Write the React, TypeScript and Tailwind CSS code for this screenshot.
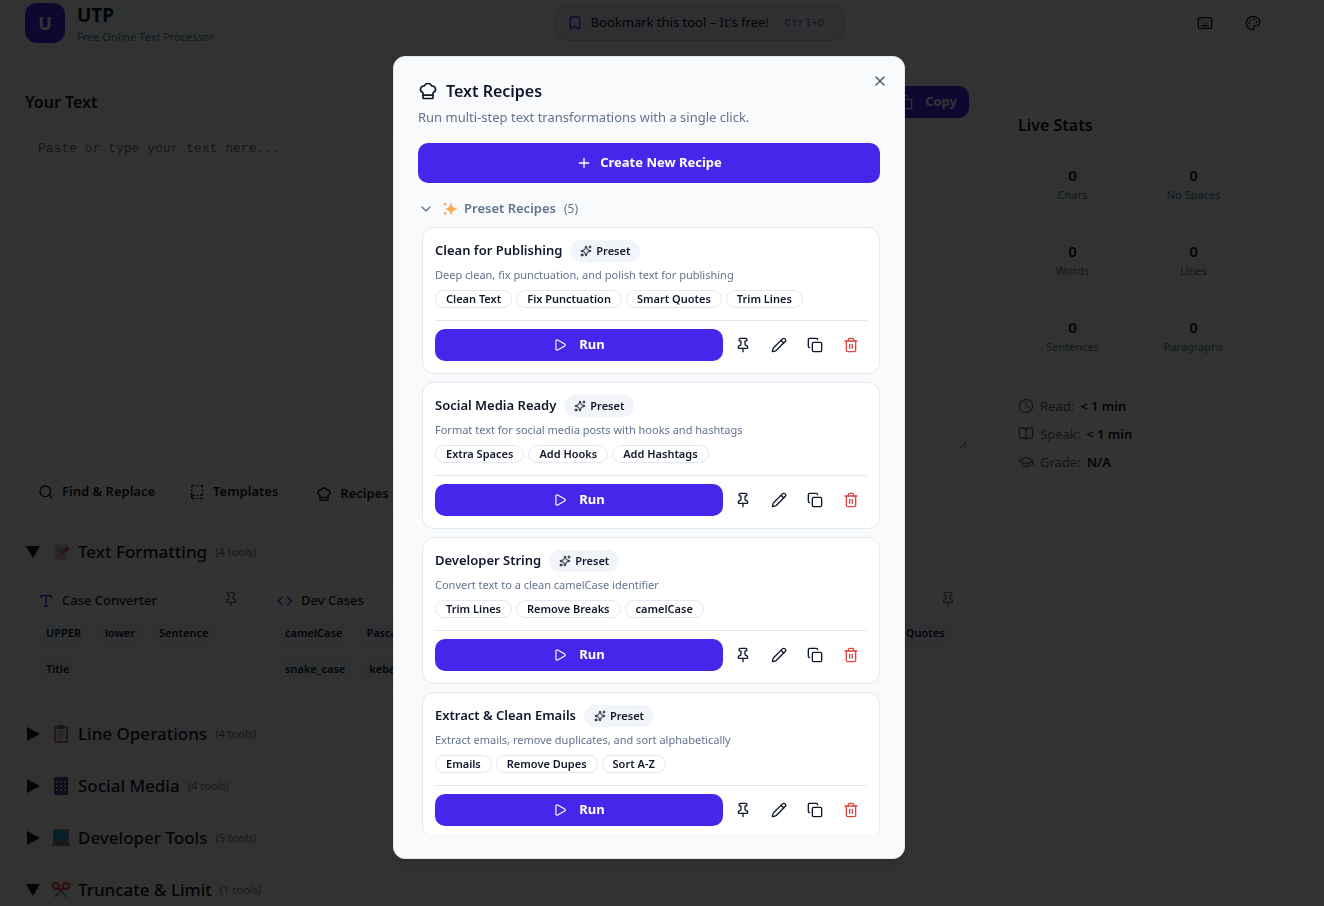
import { useState } from 'react';
import type { ReactNode } from 'react';
import {
  BookDashed,
  Bookmark,
  BookOpen,
  ChefHat,
  ChevronDown,
  Clock,
  Code,
  Copy,
  GraduationCap,
  Keyboard,
  Link,
  Palette,
  Pencil,
  Pin,
  Play,
  Plus,
  Quote,
  Search,
  Sparkles,
  Trash2,
  Type,
  X,
} from 'lucide-react';

interface Recipe {
  name: string;
  description: string;
  steps: string[];
}

const RECIPES: Recipe[] = [
  {
    name: 'Clean for Publishing',
    description: 'Deep clean, fix punctuation, and polish text for publishing',
    steps: ['Clean Text', 'Fix Punctuation', 'Smart Quotes', 'Trim Lines'],
  },
  {
    name: 'Social Media Ready',
    description: 'Format text for social media posts with hooks and hashtags',
    steps: ['Extra Spaces', 'Add Hooks', 'Add Hashtags'],
  },
  {
    name: 'Developer String',
    description: 'Convert text to a clean camelCase identifier',
    steps: ['Trim Lines', 'Remove Breaks', 'camelCase'],
  },
  {
    name: 'Extract & Clean Emails',
    description: 'Extract emails, remove duplicates, and sort alphabetically',
    steps: ['Emails', 'Remove Dupes', 'Sort A-Z'],
  },
];

const STATS = ['Chars', 'No Spaces', 'Words', 'Lines', 'Sentences', 'Paragraphs'];

const TOOLS = [
  { name: 'Case Converter', icon: Type, actions: ['UPPER', 'lower', 'Sentence', 'Title'] },
  { name: 'Dev Cases', icon: Code, actions: ['camelCase', 'PascalCase', 'snake_case', 'kebab-case'] },
  { name: 'Slugs', icon: Link, actions: ['Slugify'] },
  { name: 'Punctuation', icon: Quote, actions: ['Fix Punctuation', 'Smart Quotes'] },
];

function MemoIcon() {
  return (
    <svg viewBox="0 0 18 18" className="h-[18px] w-[18px]" aria-hidden="true">
      <path d="M2 1h13v16H2z" fill="#d9d3e2" />
      <path d="M4 5h7M4 8h6M4 11h5M4 14h9" stroke="#9a93ab" />
      <path d="M7 13l1-4 7-6 3 3-7 6z" fill="#f0705a" />
      <path d="M7 13l1-4 3 3z" fill="#f5b878" />
    </svg>
  );
}

function ClipboardIcon() {
  return (
    <svg viewBox="0 0 18 18" className="h-[18px] w-[18px]" aria-hidden="true">
      <rect x="2" y="1" width="14" height="17" rx="1" fill="#b97f70" />
      <path d="M4 3h10v13H4z" fill="#e8e2ea" />
      <path d="M6 0h6v4H6z" fill="#77728a" />
      <path d="M6 7h6M6 10h6M6 13h4" stroke="#9a93ab" />
    </svg>
  );
}

function PhoneIcon() {
  return (
    <svg viewBox="0 0 18 18" className="h-[18px] w-[18px]" aria-hidden="true">
      <rect x="2" y="0" width="14" height="18" rx="1" fill="#5b3f8c" />
      <path d="M4 4h2v2H4zM8 4h2v2H8zM12 4h2v2h-2zM4 8h2v2H4zM8 8h2v2H8zM12 8h2v2h-2zM4 12h2v2H4zM8 12h2v2H8zM12 12h2v2h-2z" fill="#c9bfe0" />
    </svg>
  );
}

function LaptopIcon() {
  return (
    <svg viewBox="0 0 18 18" className="h-[18px] w-[18px]" aria-hidden="true">
      <rect x="1" y="0" width="16" height="13" rx="1" fill="#8a8598" />
      <path d="M2 1h14v11H2z" fill="#2aa5c4" />
      <path d="M1 13h16l1 4H0z" fill="#7d7a86" />
    </svg>
  );
}

function ScissorsIcon() {
  return (
    <svg viewBox="0 0 18 18" className="h-[18px] w-[18px]" aria-hidden="true">
      <path d="M7 8l8 8M11 8l-8 8" stroke="#9a97a5" strokeWidth="2" />
      <g fill="none" stroke="#e0483a" strokeWidth="2">
        <circle cx="4" cy="5" r="3" />
        <circle cx="14" cy="5" r="3" />
        <path d="M6 7l3 2 3-2" />
      </g>
    </svg>
  );
}

function SparkleEmoji() {
  return (
    <svg viewBox="0 0 16 16" className="h-4 w-4" aria-hidden="true">
      <path d="M9 1c.9 4.500 2 6 7 7-5 1-6.100 2.500-7 7-.9-4.500-2-6-6-7 4-1 5.100-2.500 6-7z" fill="#fba94c" />
      <path d="M3 1c.3 1.500.7 1.900 2 2.300-1.300.3-1.700.8-2 2.200-.3-1.400-.7-1.900-2-2.200C2.300 2.900 2.700 2.500 3 1z" fill="#f58f5b" />
      <path d="M3 10c.3 1.500.7 1.900 2 2.300-1.300.3-1.700.8-2 2.200-.3-1.400-.7-1.900-2-2.200 1.300-.4 1.700-.8 2-2.300z" fill="#f58f5b" />
    </svg>
  );
}

function Triangle({ open }: { open: boolean }) {
  return (
    <svg viewBox="0 0 16 16" className="h-4 w-4" fill="#0f172a" aria-hidden="true">
      {open ? <path d="M1 2h14L8 14z" /> : <path d="M2 1l13 7-13 7z" />}
    </svg>
  );
}

function SectionHeader({ icon, title, count, open }: { icon: ReactNode; title: string; count: number; open: boolean }) {
  return (
    <button aria-expanded={open} className="flex h-7 items-center text-left">
      <Triangle open={open} />
      <span className="ml-[11px]">{icon}</span>
      <span className="ml-2 text-[17px] leading-7 font-medium">{title}</span>
      <span className="ml-2 text-[11px] text-slate-500">({count} tools)</span>
    </button>
  );
}

function Header() {
  return (
    <header className="h-[62px] border-b border-slate-200 bg-[#f0fdf9] pt-px pr-[51px] pl-[25px]">
      <div className="flex items-center justify-between">
        <div className="flex items-center gap-3">
          <div className="flex size-10 items-center justify-center rounded-xl bg-[#4726eb] text-lg font-bold text-white">U</div>
          <div>
            <h1 className="text-[19px] leading-7 font-bold">UTP</h1>
            <p className="text-[11px] leading-4 text-slate-500">Free Online Text Processor</p>
          </div>
        </div>
        <button className="flex h-9 items-center gap-2 rounded-xl border border-[#d3cbf5] bg-[#e8e5f5] px-3 text-[13px]">
          <Bookmark className="size-4 text-[#4726eb]" />
          Bookmark this tool – It's free!
          <kbd className="rounded bg-[#eeecf6] px-2 py-1 font-['Liberation_Mono',monospace] text-[11px] leading-3 text-slate-500">
            Ctrl+D
          </kbd>
        </button>
        <div className="flex gap-2">
          <button aria-label="Keyboard shortcuts" className="flex size-10 items-center justify-center">
            <Keyboard className="size-4" />
          </button>
          <button aria-label="Theme" className="flex size-10 items-center justify-center">
            <Palette className="size-4" />
          </button>
        </div>
      </div>
    </header>
  );
}

function ToolCard({ tool }: { tool: (typeof TOOLS)[number] }) {
  const Icon = tool.icon;
  return (
    <div className="h-[118px] rounded-xl border border-slate-200 bg-white px-3 pt-3">
      <div className="flex items-start justify-between">
        <h3 className="flex h-5 items-center gap-2 text-[13px] font-medium">
          <Icon className="size-4 text-[#4726eb]" />
          {tool.name}
        </h3>
        <button aria-label={`Pin ${tool.name}`} className="text-slate-500">
          <Pin className="size-4" />
        </button>
      </div>
      <div className="mt-2 flex flex-wrap gap-2">
        {tool.actions.map((action) => (
          <button key={action} className="h-7 rounded-md bg-slate-100 px-2 text-[11px] font-semibold">
            {action}
          </button>
        ))}
      </div>
    </div>
  );
}

function StatsPanel() {
  return (
    <aside className="w-[280px] shrink-0 self-start rounded-xl border border-slate-200 bg-white p-6">
      <h2 className="text-[16px] leading-7 font-semibold">Live Stats</h2>
      <div className="mt-3 grid grid-cols-2 gap-3">
        {STATS.map((label) => (
          <div key={label} className="rounded-lg bg-[#f2fbf8] py-3 text-center">
            <div className="text-[15px] leading-6 font-semibold">0</div>
            <div className="text-[11px] leading-4 text-slate-500">{label}</div>
          </div>
        ))}
      </div>
      <div className="mt-4 space-y-2 border-t border-slate-200 pt-3 text-[13px] leading-5 text-slate-500">
        <p className="flex items-center gap-1.5">
          <Clock className="size-4" /> Read: <b className="font-semibold text-slate-900">&lt; 1 min</b>
        </p>
        <p className="flex items-center gap-1.5">
          <BookOpen className="size-4" /> Speak: <b className="font-semibold text-slate-900">&lt; 1 min</b>
        </p>
        <p className="flex items-center gap-1.5">
          <GraduationCap className="size-4" /> Grade: <b className="font-semibold text-slate-900">N/A</b>
        </p>
      </div>
    </aside>
  );
}

function RecipeCard({ recipe }: { recipe: Recipe }) {
  return (
    <article className="rounded-xl border border-slate-200 bg-white p-3">
      <div className="flex h-[22px] items-center gap-2">
        <h3 className="text-[13px] font-semibold">{recipe.name}</h3>
        <span className="flex h-[22px] items-center gap-1 rounded-full bg-slate-100 px-2.5 text-[11px] font-semibold">
          <Sparkles className="size-3" />
          Preset
        </span>
      </div>
      <p className="mt-1 text-[11px] leading-[18px] text-slate-500">{recipe.description}</p>
      <ul className="mt-1.5 flex gap-1">
        {recipe.steps.map((step) => (
          <li key={step} className="flex h-[18px] items-center rounded-full border border-slate-200 px-2.5 text-[11px] font-semibold">
            {step}
          </li>
        ))}
      </ul>
      <div className="mt-3 flex gap-1 border-t border-slate-200 pt-2">
        <button className="flex h-8 flex-1 items-center justify-center gap-3 rounded-[10px] bg-[#4726eb] text-[13px] font-bold text-white">
          <Play className="size-3.5" />
          Run
        </button>
        <button aria-label="Pin" className="flex size-8 items-center justify-center">
          <Pin className="size-4" />
        </button>
        <button aria-label="Edit" className="flex size-8 items-center justify-center">
          <Pencil className="size-4" />
        </button>
        <button aria-label="Duplicate" className="flex size-8 items-center justify-center">
          <Copy className="size-4" />
        </button>
        <button aria-label="Delete" className="flex size-8 items-center justify-center text-[#e04545]">
          <Trash2 className="size-4" />
        </button>
      </div>
    </article>
  );
}

function RecipesDialog({ onClose }: { onClose: () => void }) {
  return (
    <div className="fixed inset-0 flex justify-center bg-black/80 pt-14 pr-[26px] pb-[47px]">
      <div
        role="dialog"
        aria-labelledby="recipes-title"
        className="relative flex w-full max-w-lg flex-col rounded-xl border border-slate-200 bg-slate-50 p-6 shadow-lg"
      >
        <button aria-label="Close" onClick={onClose} className="absolute top-4 right-4 text-slate-600">
          <X className="size-4" />
        </button>
        <h2 id="recipes-title" className="flex h-5 items-center gap-2 text-[16px] font-semibold">
          <ChefHat className="size-5" />
          Text Recipes
        </h2>
        <p className="mt-1.5 text-[13px] leading-5 text-slate-500">Run multi-step text transformations with a single click.</p>
        <button className="mt-4 flex h-10 shrink-0 items-center justify-center gap-2 rounded-[10px] bg-[#4726eb] text-[13px] font-bold text-white">
          <Plus className="size-4" />
          Create New Recipe
        </button>
        <div className="mt-4 min-h-0 flex-1 overflow-hidden">
          <button aria-expanded="true" className="flex h-5 items-center text-[13px] font-semibold text-slate-500">
            <ChevronDown className="size-4" />
            <span className="mr-1.5 ml-2">
              <SparkleEmoji />
            </span>
            Preset Recipes
            <span className="ml-2 text-[12px] font-normal">(5)</span>
          </button>
          <div className="mt-2 space-y-2 pl-1">
            {RECIPES.map((recipe) => (
              <RecipeCard key={recipe.name} recipe={recipe} />
            ))}
          </div>
        </div>
      </div>
    </div>
  );
}

export default function App() {
  const [text, setText] = useState('');
  const [showRecipes, setShowRecipes] = useState(true);

  return (
    <div className="h-screen overflow-hidden bg-[#fafafa] font-['Noto_Sans','Open_Sans',sans-serif] text-slate-900">
      <Header />
      <div className="flex gap-6 pt-6 pr-[51px] pl-[25px]">
        <main className="min-w-0 flex-1">
          <div className="flex h-8 items-center justify-between">
            <label htmlFor="text" className="text-[16px] font-semibold">
              Your Text
            </label>
            <button className="flex h-8 items-center gap-3 rounded-[10px] bg-[#4726eb] px-3 text-[13px] font-bold text-white">
              <Copy className="size-4" />
              Copy
            </button>
          </div>
          <textarea
            id="text"
            value={text}
            onChange={(e) => setText(e.target.value)}
            placeholder="Paste or type your text here..."
            className="mt-3 block h-80 w-full resize rounded-xl border border-slate-200 bg-white px-3 py-2 font-['Liberation_Mono',monospace] text-[13px] leading-5 placeholder:text-slate-500"
          />
          <div className="mt-6 flex h-10 items-start gap-2 text-[13px] font-semibold">
            <button className="flex h-9 items-center gap-2 rounded-xl border border-slate-200 bg-white px-3">
              <Search className="size-4" />
              Find &amp; Replace
            </button>
            <button className="flex h-9 items-center gap-2 rounded-xl border border-slate-200 bg-white px-3">
              <BookDashed className="size-4" />
              Templates
            </button>
            <button
              onClick={() => setShowRecipes(true)}
              className="flex h-10 items-center gap-2 rounded-xl border border-slate-200 bg-white px-4"
            >
              <ChefHat className="size-4" />
              Recipes
            </button>
          </div>
          <div className="mt-6 space-y-6">
            <section>
              <SectionHeader icon={<MemoIcon />} title="Text Formatting" count={4} open />
              <div className="mt-3 grid grid-cols-4 gap-3">
                {TOOLS.map((tool) => (
                  <ToolCard key={tool.name} tool={tool} />
                ))}
              </div>
            </section>
            <SectionHeader icon={<ClipboardIcon />} title="Line Operations" count={4} open={false} />
            <SectionHeader icon={<PhoneIcon />} title="Social Media" count={4} open={false} />
            <SectionHeader icon={<LaptopIcon />} title="Developer Tools" count={5} open={false} />
            <SectionHeader icon={<ScissorsIcon />} title="Truncate & Limit" count={1} open />
          </div>
        </main>
        <StatsPanel />
      </div>
      {showRecipes && <RecipesDialog onClose={() => setShowRecipes(false)} />}
    </div>
  );
}
